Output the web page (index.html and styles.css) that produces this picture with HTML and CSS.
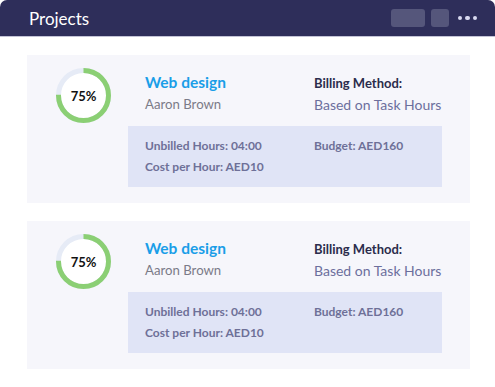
FILE: index.html
```html
<!DOCTYPE html>
<html>
<head>
<meta charset="utf-8">
<link rel="stylesheet" href="styles.css">
</head>
<body>
<div class="panel">
  <header class="header">
    <h1 class="title">Projects</h1>
    <div class="actions">
      <span class="btn btn-wide"></span>
      <span class="btn btn-sq"></span>
      <span class="dots"><i></i><i></i><i></i></span>
    </div>
  </header>
  <main class="list">
    <section class="card">
      <div class="ring">
        <svg width="55" height="55" viewBox="0 0 55 55">
          <circle cx="27.5" cy="27.5" r="25" fill="#ffffff" stroke="#e6ebf6" stroke-width="5"/>
          <circle cx="27.5" cy="27.5" r="25" fill="none" stroke="#8bcf74" stroke-width="5" stroke-dasharray="117.81 157.08" transform="rotate(-90 27.5 27.5)"/>
        </svg>
        <span class="pct">75%</span>
      </div>
      <div class="main">
        <div class="grid top">
          <div>
            <div class="proj">Web design</div>
            <div class="person">Aaron Brown</div>
          </div>
          <div>
            <div class="label">Billing Method:</div>
            <div class="value">Based on Task Hours</div>
          </div>
        </div>
        <div class="grid box">
          <div>
            <div>Unbilled Hours: 04:00</div>
            <div>Cost per Hour: AED10</div>
          </div>
          <div>
            <div>Budget: AED160</div>
          </div>
        </div>
      </div>
    </section>
    <section class="card">
      <div class="ring">
        <svg width="55" height="55" viewBox="0 0 55 55">
          <circle cx="27.5" cy="27.5" r="25" fill="#ffffff" stroke="#e6ebf6" stroke-width="5"/>
          <circle cx="27.5" cy="27.5" r="25" fill="none" stroke="#8bcf74" stroke-width="5" stroke-dasharray="117.81 157.08" transform="rotate(-90 27.5 27.5)"/>
        </svg>
        <span class="pct">75%</span>
      </div>
      <div class="main">
        <div class="grid top">
          <div>
            <div class="proj">Web design</div>
            <div class="person">Aaron Brown</div>
          </div>
          <div>
            <div class="label">Billing Method:</div>
            <div class="value">Based on Task Hours</div>
          </div>
        </div>
        <div class="grid box">
          <div>
            <div>Unbilled Hours: 04:00</div>
            <div>Cost per Hour: AED10</div>
          </div>
          <div>
            <div>Budget: AED160</div>
          </div>
        </div>
      </div>
    </section>
  </main>
</div>
</body>
</html>
```

FILE: styles.css
```css
* { box-sizing: border-box; margin: 0; padding: 0; }
html, body { background: #ffffff; }
body {
  width: 495px;
  height: 387px;
  font-family: "Lato", "Open Sans", sans-serif;
  overflow: hidden;
}
.panel {
  width: 495px;
  height: 387px;
  background: #ffffff;
  border-radius: 7px;
  overflow: hidden;
  display: flex;
  flex-direction: column;
}
.header {
  height: 37px;
  background: #2e2e5a;
  border-bottom: 1px solid #c3c3d6;
  display: flex;
  align-items: center;
  justify-content: space-between;
  padding: 0 18px 0 29px;
  flex: none;
}
.title {
  font-weight: 400;
  font-size: 17px;
  color: #ffffff;
}
.actions {
  display: flex;
  align-items: center;
}
.btn {
  display: block;
  height: 18px;
  background: #55567b;
  border-radius: 3px;
}
.btn-wide { width: 34px; }
.btn-sq { width: 18px; margin-left: 6px; }
.dots {
  display: flex;
  gap: 3px;
  margin-left: 9px;
}
.dots i {
  display: block;
  width: 4.5px;
  height: 4.5px;
  border-radius: 50%;
  background: #d9daf0;
}
.list {
  display: flex;
  flex-direction: column;
  gap: 18px;
  padding: 18px 25px 18px 27px;
}
.card {
  background: #f6f6fb;
  height: 148px;
  display: flex;
  align-items: flex-start;
  padding: 12px 28px 16px 29px;
}
.ring {
  position: relative;
  width: 55px;
  height: 55px;
  flex: none;
  margin-top: 1px;
}
.ring svg { display: block; }
.pct {
  position: absolute;
  inset: 0;
  display: flex;
  align-items: center;
  justify-content: center;
  font-weight: 700;
  font-size: 13px;
  color: #111111;
}
.main {
  margin-left: 17px;
  width: 314px;
  margin-top: 4px;
}
.grid {
  display: grid;
  grid-template-columns: 169px 1fr;
  padding: 0 0 0 17px;
  white-space: nowrap;
}
.proj {
  font-size: 15.5px;
  font-weight: 700;
  color: #1a9ee8;
  line-height: 22px;
}
.person {
  font-size: 13.2px;
  color: #7b7b88;
  line-height: 22px;
}
.label {
  font-size: 13px;
  font-weight: 700;
  color: #2b2c4b;
  line-height: 22px;
  padding-top: 1px;
}
.value {
  font-size: 14px;
  color: #6c6f9d;
  line-height: 21px;
}
.box {
  margin-top: 11px;
  background: #e0e4f6;
  padding-top: 9px;
  padding-bottom: 10px;
  font-size: 12px;
  font-weight: 700;
  color: #6e7098;
  line-height: 21px;
}
```
